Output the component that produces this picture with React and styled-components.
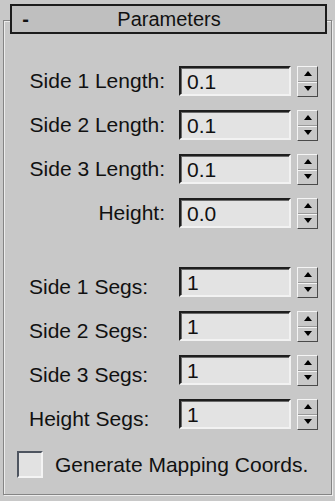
import React from 'react'
import styled, { createGlobalStyle } from 'styled-components'

const GlobalStyle = createGlobalStyle`
html, body {
    margin: 0;
    padding: 0;
    background-color: #c8c8c8;
}
body {
    width: 335px;
    height: 501px;
    overflow: hidden;
    font-family: "Liberation Sans", Arial, sans-serif;
    color: #111;
}
`

const Frame = styled.div`
margin: 20px 3px 0 3px;
height: 473px;
border: 1px solid #858585;
box-shadow: inset 1px 1px 0 #ececec, 1px 1px 0 #ececec;
display: flex;
flex-direction: column;
`

const Header = styled.div`
margin: -17px 4px 0 6px;
height: 26px;
border: 2px solid #1c1c1c;
background-color: #bfbfbf;
display: flex;
align-items: center;
font-size: 20px;
span {
    flex: 1;
    text-align: center;
    padding-right: 16px;
}
`

const Collapse = styled.b`
width: 17px;
text-align: right;
font-weight: bold;
`

const Group = styled.div`
display: flex;
flex-direction: column;
gap: 14px;
margin-top: ${props => props.$top}px;
`

const Row = styled.div`
display: flex;
align-items: center;
height: 30px;
padding-left: 25px;
`

const Label = styled.span`
width: 136px;
font-size: 21px;
text-align: ${props => props.$align || 'right'};
margin-top: ${props => props.$drop || 0}px;
white-space: nowrap;
`

const Field = styled.div`
margin-left: 14px;
width: 102px;
height: 26px;
border: 2px solid;
border-color: #1e1e1e #f2f2f2 #f2f2f2 #1e1e1e;
box-shadow: inset 1px 1px 0 #6a6a6a;
background-color: #e3e3e3;
font-size: 21px;
line-height: 27px;
padding-left: 6px;
box-sizing: content-box;
`

const Spinner = styled.div`
margin-left: 6px;
width: 19px;
height: 29px;
display: flex;
flex-direction: column;
border-top: 1px solid #f4f4f4;
border-left: 1px solid #f4f4f4;
border-right: 1px solid #4a4a4a;
border-bottom: 1px solid #4a4a4a;
`

const SpinHalf = styled.div`
flex: 1;
display: flex;
align-items: center;
justify-content: center;
border-top: ${props => props.$split ? '1px solid #9a9a9a' : 'none'};
box-shadow: ${props => props.$split ? 'inset 0 1px 0 #f4f4f4' : 'none'};
`

const Arrow = styled.svg`
width: 8px;
height: 5px;
`

const CheckRow = styled.label`
display: flex;
align-items: center;
margin-top: 22px;
padding-left: 13px;
font-size: 21px;
`

const Box = styled.span`
width: 22px;
height: 23px;
border: 2px solid;
border-color: #4e5560 #f4f4f4 #f4f4f4 #4e5560;
background-color: #e2e2e2;
margin-right: 12px;
`

const Spin = () => (
    <Spinner>
        <SpinHalf>
            <Arrow viewBox="0 0 8 5"><path d="M4 0 L8 5 L0 5 Z" fill="#000" /></Arrow>
        </SpinHalf>
        <SpinHalf $split>
            <Arrow viewBox="0 0 8 5"><path d="M0 0 L8 0 L4 5 Z" fill="#000" /></Arrow>
        </SpinHalf>
    </Spinner>
)

const lengths = [
    ['Side 1 Length:', '0.1'],
    ['Side 2 Length:', '0.1'],
    ['Side 3 Length:', '0.1'],
    ['Height:', '0.0'],
]

const segs = [
    ['Side 1 Segs:', '1'],
    ['Side 2 Segs:', '1'],
    ['Side 3 Segs:', '1'],
    ['Height Segs:', '1'],
]

const App = () => {
    return (
        <>
            <GlobalStyle />
            <Frame>
                <Header>
                    <Collapse>-</Collapse>
                    <span>Parameters</span>
                </Header>
                <Group $top={32}>
                    {lengths.map(([label, value]) => (
                        <Row key={label}>
                            <Label>{label}</Label>
                            <Field>{value}</Field>
                            <Spin />
                        </Row>
                    ))}
                </Group>
                <Group $top={39}>
                    {segs.map(([label, value]) => (
                        <Row key={label}>
                            <Label $align="left" $drop={10}>{label}</Label>
                            <Field>{value}</Field>
                            <Spin />
                        </Row>
                    ))}
                </Group>
                <CheckRow>
                    <Box />
                    Generate Mapping Coords.
                </CheckRow>
            </Frame>
        </>
    )
}

export default App
